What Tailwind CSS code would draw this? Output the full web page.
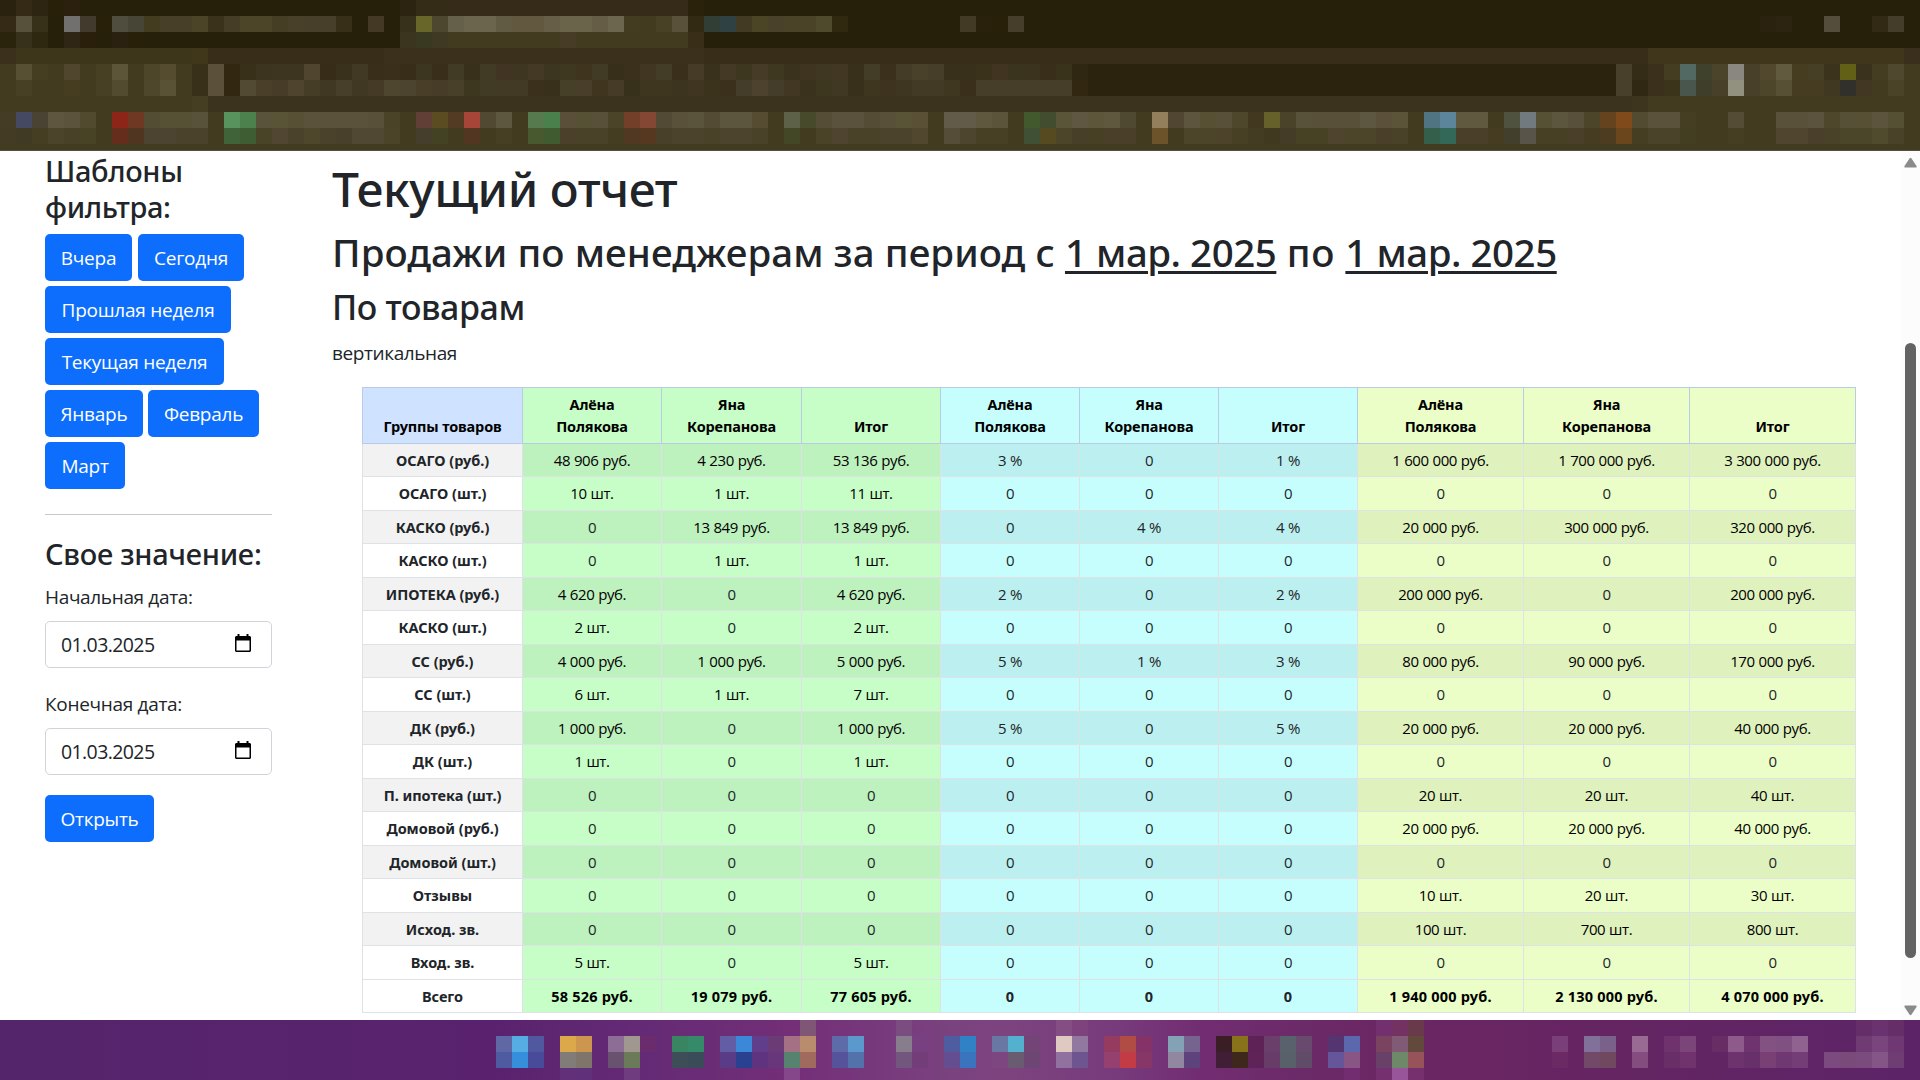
<!DOCTYPE html>
<html lang="ru">
<head>
<meta charset="utf-8">
<title>Текущий отчет</title>
<script src="https://cdn.jsdelivr.net/npm/@tailwindcss/browser@4"></script>
</head>
<body class="flex h-[1080px] w-[1920px] flex-col overflow-hidden bg-white font-['Open_Sans',sans-serif] text-[#212529]">

<header id="browser" class="h-[151px] shrink-0 overflow-hidden border-b border-[#5a4b40] bg-[#433b20]"></header>

<div class="flex min-h-0 flex-1">
  <aside class="w-[272px] shrink-0 pt-0.5 pl-[45px]">
    <h4 class="font-['Noto_Sans',sans-serif] text-[29px] leading-9 font-medium tracking-[-0.35px]">Шаблоны<br>фильтра:</h4>
    <div class="mt-[9px] flex flex-wrap gap-x-1.5 gap-y-[5px] text-[19px] leading-[30px] tracking-[-0.25px] text-white">
      <button class="h-[47px] w-[87px] rounded-[5px] bg-[#0d6efd]">Вчера</button>
      <button class="h-[47px] w-[106px] rounded-[5px] bg-[#0d6efd]">Сегодня</button>
      <button class="h-[47px] w-[186px] rounded-[5px] bg-[#0d6efd]">Прошлая неделя</button>
      <button class="h-[47px] w-[179px] rounded-[5px] bg-[#0d6efd]">Текущая неделя</button>
      <button class="h-[47px] w-[98px] rounded-[5px] bg-[#0d6efd]">Январь</button>
      <button class="-ml-px h-[47px] w-[111px] rounded-[5px] bg-[#0d6efd]">Февраль</button>
      <button class="h-[47px] w-[80px] rounded-[5px] bg-[#0d6efd]">Март</button>
    </div>
    <hr class="mt-[25px] border-[#c7c8c9]">
    <h4 class="mt-[21px] font-['Noto_Sans',sans-serif] text-[29px] leading-9 font-medium tracking-[-0.25px]">Свое значение:</h4>
    <div class="mt-2.5 text-[19px] leading-[30px] tracking-[-0.34px]">Начальная дата:</div>
    <div class="mt-[9px] flex h-[47px] items-center justify-between rounded-[5px] border border-[#ced4da] pt-px pr-5 pl-[15px] text-[19.5px] tracking-[-0.6px]">01.03.2025
      <svg class="-mt-1 h-[18px] w-4" viewBox="0 0 16 18"><path fill="#000" fill-rule="evenodd" d="M2.5 0h2v2h7V0h2v2H15l1 1v14l-1 1H1l-1-1V3l1-1h1.500zM1.500 6.500v10h13v-10z"/></svg>
    </div>
    <div class="mt-[21px] text-[19px] leading-[30px] tracking-[-0.3px]">Конечная дата:</div>
    <div class="mt-[9px] flex h-[47px] items-center justify-between rounded-[5px] border border-[#ced4da] pt-px pr-5 pl-[15px] text-[19.5px] tracking-[-0.6px]">01.03.2025
      <svg class="-mt-1 h-[18px] w-4" viewBox="0 0 16 18"><path fill="#000" fill-rule="evenodd" d="M2.5 0h2v2h7V0h2v2H15l1 1v14l-1 1H1l-1-1V3l1-1h1.500zM1.500 6.500v10h13v-10z"/></svg>
    </div>
    <button class="mt-5 h-[47px] w-[109px] rounded-[5px] bg-[#0d6efd] pt-px text-[19px] tracking-[-0.25px] text-white">Открыть</button>
  </aside>

  <main class="min-w-0 flex-1 pt-2 pl-[60px]">
    <h1 class="font-['Noto_Sans',sans-serif] text-[48px] leading-[60px] font-medium tracking-[-0.45px]">Текущий отчет</h1>
    <h2 class="mt-[9px] font-['Noto_Sans',sans-serif] text-[38.5px] leading-[48px] font-medium tracking-[0.07px] whitespace-nowrap">Продажи по менеджерам за период с <span class="tracking-[-0.47px] underline decoration-[3px] underline-offset-[4px]">1 мар. 2025</span><span class="tracking-[0.5px]"> по </span><span class="tracking-[-0.47px] underline decoration-[3px] underline-offset-[4px]">1 мар. 2025</span></h2>
    <h3 class="mt-2.5 font-['Noto_Sans',sans-serif] text-[34px] leading-[42px] font-medium tracking-[-0.38px]">По товарам</h3>
    <p class="mt-2.5 text-[19px] leading-[30px] tracking-[-0.4px]">вертикальная</p>
    <div class="pt-[19px] pl-[30px]">
      <div id="report" class="w-[1494px] border-t border-l border-[#dee2e6] text-center text-[14.5px] leading-[22.5px]"></div>
    </div>
  </main>

  <div class="relative w-[19px] shrink-0 bg-[#fcfcfc]">
    <svg class="absolute top-[6px] left-[3px] h-[11px] w-[13px]" viewBox="0 0 13 11"><path fill="#8a8a8a" d="M5.500 1.500Q6.500 0 7.500 1.500L12.500 9Q13 10.500 12 10.500H1Q0 10.500.500 9z"/></svg>
    <div class="absolute top-[192px] left-1 h-[615px] w-[11px] rounded-full bg-[#636363]"></div>
    <svg class="absolute top-[854px] left-[3px] h-[11px] w-[13px]" viewBox="0 0 13 11"><path fill="#8a8a8a" d="M5.500 9.500Q6.500 11 7.500 9.500L12.500 2Q13 .500 12 .500H1Q0 .500.500 2z"/></svg>
  </div>
</div>

<footer id="taskbar" class="h-[60px] shrink-0 overflow-hidden bg-linear-[90deg,#54256b_0px,#5a226e_496px,#642a75_640px,#742f78_800px,#7a427f_950px,#7c437f_1010px,#773a7b_1120px,#722d72_1200px,#6b2a68_1300px,#6b2663_1400px,#652562_1600px,#5c2467_1900px]"></footer>

<script>
// Each line is a row of 16px cells: "start colour colour*count ...; start ..."
const browserRows = `
0 2a220f 352a16 2d2512 282009 2a200d 261f09*20 2c2410 352c18*2 362b18*15 2b220c 261f09*76
0 352a16 57503a 37311a 261f09 71706e 423a2c 282009 4f4e3e 474535 443c1f 483f28*2 4b4427 3b321c 453d25 4c4528*2 463d25 494029 483f2a*2 372f18 261f09 433924 261f09 37301a 686628 4e472f 656049 6a654c*2 625b43 62583f*2 665e47 6a644b*2 665d46 6c664f 443c20 433b1f 494126 5a513b 322a13 303e36 2f4142 433a24 4b4425 4a412a 4a4327*2 504a2d 312810 261f09*7 433a26 2a210d 292009 463d2a 261f09*46 2a220e 2c2411 261f09*2 554d3c 261f09*2 322a14 433d29 261f09
0 2b240d 37301a 2f2811 261f09 2f2615 291f0a 261f09 2a2110 282009 261f09*16 3b341e 393820 3f3923 433b20*7 473c26 433b20*7 392f19 261f09*76
0 3b301b 3e361b*11 40361a 372d19*11 3a301b*20 372d19*59 3f361b*16 3a2f1c
0 433b20 585032 463e21 433b20 50462e 433b20 474023 5d5537 433b20 4e4629 554c30 433b20 393019 5b513a 322812 393019 3c341f 3e3520*2 50452e 362c18 3a311c 413924 382e1a 3a2f1b 382d18 3c3520 392e1a 413a24 38301b 413a24 423422 3e3620 443925 3c3520 3e3820 3f351f 413a24 372f1a 3b301c 413622 433c26 392f1b 453b26 39311c 433925 3e3720 453b27 3e3821 3a321c 3e341f 3f3721 423723 38301b 433c27 3a301c 443c26 4a412b 463e28 38301b*2 3b321c 413522 3a331d 3c331f 392e1a 3a331c 302713 2c230e*33 48402b 352c17 3a301b 453d21 526862 3f412c 4c432b 8a8680 484029 51482d 625a3e 463d21 473f25 3c331c 625f16 3b321e 453d22 4f472e 433b20
0 433b20 484024 433b20*2 463d21 433b20 474024 534b30 433b20 4f472b 5a5235 433b20 393019 5b513a 322812 534a33 4a402a 463c28 4f452f 453d26 413823 473f29 413824 443a26 4e462f 4c442e 493f29 463c27 484029 3e3720 413a24 433a25*2 3a301b 38301a 474029 493e2a 40361f 453b27 37301a 3f3620*2 3c341e 3f3520 3c331d 3a301b 443d2a 4c422e 433d29 413723 3a321c 3e3720 413824 38301b 3f3620 3d331e 3e3620 433a26*2 3f3720 392f1b 463e29*6 322812 2c230e*33 48402b 302812 3a301b 3c341a 48564e 3f3e2a 484029 92907f 484029 4e462b 585034 453c21*2 413822 32302a 413722 433b20 4b4328 433b20
0 433b20*12 463e22 3c331f*89 3e351e 433b20*17
0 453c25 454a62 4a4334 5e563f 5c533c 514a2f 433b20 8d2618 6e3823 534d34 565035*2 59523a 433b20 58935e 4c804d 5a533c 5a5437 575035 5b523c*4 59503a 4b4328 433b20 613f36 5b4c22 533a23 a64538 524933 5e573f 433b20 567a4e 4a804b 5a5039 565035 59503a 4c4428 733f29 834733 534a35 5a513b 5b543d 534b33 5d563f*2 554c32 433b20 5c6148 484a2c 564d36 5a523c*2 554c36 59503a 5a5437 595036 433b20 635b4a*2 5f583f 5c533b 433b20 41592c 424d30 5a5438 5f5741 5d563a 5f583f 504932 433b20 937f5b 504631 5d553d 575033 595039 4f472b 41381f 66612a 4a4229 59523a 59503a*3 5d5640 5b513b 5b5438 433b20 507481 5c859c 60583f*2 433b20 505240 707a7f 565035 5d563f 58503b 4d4529 66431f 804a1b 524a31 5a523b*2 463e22 433b20*2 544c35 433b20*2 5a513a*2 5b533e 4f472b 565037 575035 5d543e 555033 433b20
0 433b24 403924 453e22 4b442b 494028 494326 433b20 652e1c 503620 4c4430*2 4a422a*2 433b20 41633a 3f5d33 494328 504631 4a422a 4f472b 4a422a 49402b 514833*2 4b4428 433b20 453e2d 434222 433b20 533622 433b20 463f23 433b20 48592f 3f5b2f 4b402a 4a4228*2 453d22 503822 563820 494029 4c432c*2 4a4228 4d442d*2 4a4228 433b20 444726 433b20 4a4328 4e442f 4a4228*2 4c432c*2 51472f 433b20 554d38 4e452e 484024*2 433b20 3f5034 554a20 4d4529 483f28 484024 4a402a*2 433b20 6d532a 433b20 4d4529*2 4d432b 484024 433b22 403920 443c26 484224*2 4f452e 4d4529*2 4a402a 4a4228 433b20 345f4b 336859 4a402a*2 453c21 42402c 59544a 484024*2 4a402a 453c22 4d3c20 6b451b 463e22 4b4329*2 433e22 433b20*2 453e22 433b20*2 50462f*2 493f2a 4a4228 4b4629*2 514b2d 4a4228 433b20`;

const taskbarRows = `
50 805677;56 7a4c80;66 844e85 7e427c;86 73306e 743263 693a4a;116 652e68 6a3370 652e68
31 5f67a5 55ade3 5058a0;35 dba84a cc964f;38 8d6d96 a09890 6b2c6e;42 398561 358a6a;45 635da6 3b88d8 603e8b 6b3b75 a47083 ba8c6e;52 5d6ba8 5b99cc;56 887d8c 784080;59 4e5ca0 2f82c6;62 6878a3 54b0cf 734476;66 dfc9c0 9078a1;69 963b60 b04c44 843268;73 84a2b5 77638f;76 3a1e25 88721a 5f2257 6a3f69 58616c 684a6e;83 553570 5b68ae;86 7a4460 815b75 63493c;97 7a3e78;99 81709a 79618b;102 986a94;104 70326d 7b457a;107 692d66 8d5a8b 6f3470 845282 815082 90628f;116 6f3b72 79457c 6f3872
31 4f5ba1 368fda 484a9a;35 827c78 80756a;38 695270 6b7a59;42 3d4e58 394c57;45 5a3b87 2a4091 5f3380 68367a 57826f a16a5e;52 55549a 5371aa;56 73567e 733d7a;59 644d90 3a73be;62 7d4680 6a5c70 6e4673;66 9171a0 6e5590;69 96406f c23b45 863768;73 9187a0 5d427b;76 401e35 3d281b 602358 673c68 586069 604b68;83 65559a 895585;86 684068 6e8968 96545a;97 6c2a64;99 724a68 70485f;102 854c80;104 692d68 70336e;108 6d336d 67306b 784075 703873 743d78;114 7c4a7e 7a4a7b 7b4b7e 855588 6f3c74
35 613078 60307a;39 6f3c80;49 85478a;84 722c70;86 75306f 98559a 76306e`;

function drawCells(id, text) {
  const host = document.getElementById(id);
  for (const line of text.trim().split('\n')) {
    const cells = Array(120).fill('transparent');
    for (const run of line.split(';')) {
      const parts = run.trim().split(' ');
      let col = +parts.shift();
      for (const p of parts) {
        const [c, n] = p.split('*');
        for (let i = 0; i < (+n || 1); i++) if (col < 120) cells[col++] = '#' + c;
      }
    }
    const row = document.createElement('div');
    row.className = 'flex h-4';
    row.innerHTML = cells.map(c => `<i class="w-4 shrink-0" style="background:${c}"></i>`).join('');
    host.append(row);
  }
}
drawCells('browser', browserRows);
drawCells('taskbar', taskbarRows);

const names = ['Алёна<br>Полякова', 'Яна<br>Корепанова', 'Итог'];
const rows = `ОСАГО (руб.)|48 906 руб.|4 230 руб.|53 136 руб.|3 %|0|1 %|1 600 000 руб.|1 700 000 руб.|3 300 000 руб.
ОСАГО (шт.)|10 шт.|1 шт.|11 шт.|0|0|0|0|0|0
КАСКО (руб.)|0|13 849 руб.|13 849 руб.|0|4 %|4 %|20 000 руб.|300 000 руб.|320 000 руб.
КАСКО (шт.)|0|1 шт.|1 шт.|0|0|0|0|0|0
ИПОТЕКА (руб.)|4 620 руб.|0|4 620 руб.|2 %|0|2 %|200 000 руб.|0|200 000 руб.
КАСКО (шт.)|2 шт.|0|2 шт.|0|0|0|0|0|0
СС (руб.)|4 000 руб.|1 000 руб.|5 000 руб.|5 %|1 %|3 %|80 000 руб.|90 000 руб.|170 000 руб.
СС (шт.)|6 шт.|1 шт.|7 шт.|0|0|0|0|0|0
ДК (руб.)|1 000 руб.|0|1 000 руб.|5 %|0|5 %|20 000 руб.|20 000 руб.|40 000 руб.
ДК (шт.)|1 шт.|0|1 шт.|0|0|0|0|0|0
П. ипотека (шт.)|0|0|0|0|0|0|20 шт.|20 шт.|40 шт.
Домовой (руб.)|0|0|0|0|0|0|20 000 руб.|20 000 руб.|40 000 руб.
Домовой (шт.)|0|0|0|0|0|0|0|0|0
Отзывы|0|0|0|0|0|0|10 шт.|20 шт.|30 шт.
Исход. зв.|0|0|0|0|0|0|100 шт.|700 шт.|800 шт.
Вход. зв.|5 шт.|0|5 шт.|0|0|0|0|0|0
Всего|58 526 руб.|19 079 руб.|77 605 руб.|0|0|0|1 940 000 руб.|2 130 000 руб.|4 070 000 руб.`.split('\n').map(r => r.split('|'));

const grid = 'grid grid-cols-[160px_139px_140px_139px_139px_139px_139px_166px_166px_166px]';
const light = ['bg-white', 'bg-[#c7fec7]', 'bg-[#c6fefe]', 'bg-[#ebfec7]'];
const dark = ['bg-[#f2f2f2]', 'bg-[#bdf1bd]', 'bg-[#bcefef]', 'bg-[#dff1bd]'];
const group = i => i ? Math.ceil(i / 3) : 0;

let html = `<div class="${grid} -mt-px -ml-px h-[57px] border-t border-l border-[#bacbe6] font-['Noto_Sans',sans-serif] leading-[22px] font-bold tracking-[-0.15px] text-black">`;
['Группы товаров', ...names, ...names, ...names].forEach((t, i) => {
  html += `<div class="flex items-end justify-center border-r border-b border-[#bacbe6] pb-[6px] ${i ? light[group(i)] : 'bg-[#cfe2ff]'}"><span>${t}</span></div>`;
});
html += '</div>';
rows.forEach((r, n) => {
  const last = n === rows.length - 1;
  const tone = n % 2 || last ? light : dark;
  html += `<div class="${grid} ${n % 2 ? 'h-[34px]' : 'h-[33px]'}">`;
  r.forEach((t, i) => {
    const strong = !i ? "font-['Noto_Sans',sans-serif] font-bold tracking-[-0.03px]" : last ? "font-['Noto_Sans',sans-serif] font-bold tracking-[0.2px]" : 'text-[15px] tracking-[-0.4px] [word-spacing:0.3px]';
    const ink = i && /[а-я]/.test(t) ? 'text-black' : 'text-[#212529]';
    html += `<div class="border-r border-b border-[#dee2e6] pt-[5px] leading-[22px] ${tone[group(i)]} ${strong} ${ink}">${t}</div>`;
  });
  html += '</div>';
});
document.getElementById('report').innerHTML = html;
</script>
</body>
</html>
